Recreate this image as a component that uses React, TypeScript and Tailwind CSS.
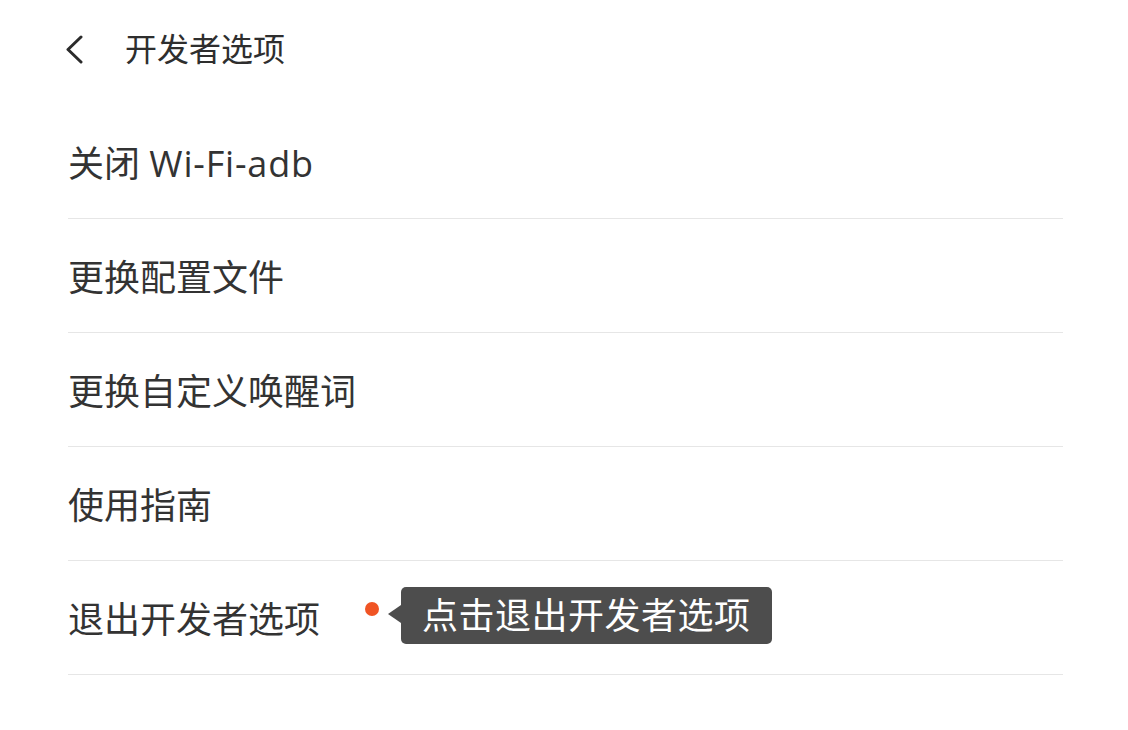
import React from "react";

const items: React.ReactNode[] = [
  <>
    关闭 <span className="tracking-[0.8px]">Wi-Fi-adb</span>
  </>,
  "更换配置文件",
  "更换自定义唤醒词",
  "使用指南",
  "退出开发者选项",
];

export default function App() {
  return (
    <div
      className="w-[1128px] h-[730px] bg-white text-[#333333] overflow-hidden"
      style={{ fontFamily: '"Open Sans", "Noto Sans CJK SC", sans-serif' }}
    >
      {/* Header */}
      <div className="h-[105px] pb-[8px] flex items-center pl-[64px]">
        <svg width="22" height="30" viewBox="0 0 22 30" fill="none" className="shrink-0">
          <polyline
            points="17,3 4,15.5 17,28"
            stroke="#2b2b2b"
            strokeWidth="3"
            strokeLinecap="round"
            strokeLinejoin="round"
          />
        </svg>
        <div className="ml-[39px] text-[32px] leading-none text-[#2e2e2e]">开发者选项</div>
      </div>

      {/* List */}
      <div className="ml-[68px] mr-[65px]">
        {items.map((label, idx) => (
          <div
            key={idx}
            className="relative h-[114px] border-b border-[#e6e6e6] flex items-center pt-[5px]"
          >
            <span className="text-[36px] leading-none">{label}</span>
            {idx === items.length - 1 && (
              <div className="absolute left-[297px] top-[26px] flex items-center">
                <div className="w-[14px] h-[14px] rounded-full bg-[#f05424] -mt-[14px]" />
                <div className="ml-[9px] w-0 h-0 border-y-[9px] border-y-transparent border-r-[13px] border-r-[#4d4d4d] -mt-[4px]" />
                <div className="h-[57px] px-[21px] rounded-[5px] bg-[#4d4d4d] text-white text-[36px] tracking-[0.5px] leading-none flex items-center">
                  点击退出开发者选项
                </div>
              </div>
            )}
          </div>
        ))}
      </div>
    </div>
  );
}
